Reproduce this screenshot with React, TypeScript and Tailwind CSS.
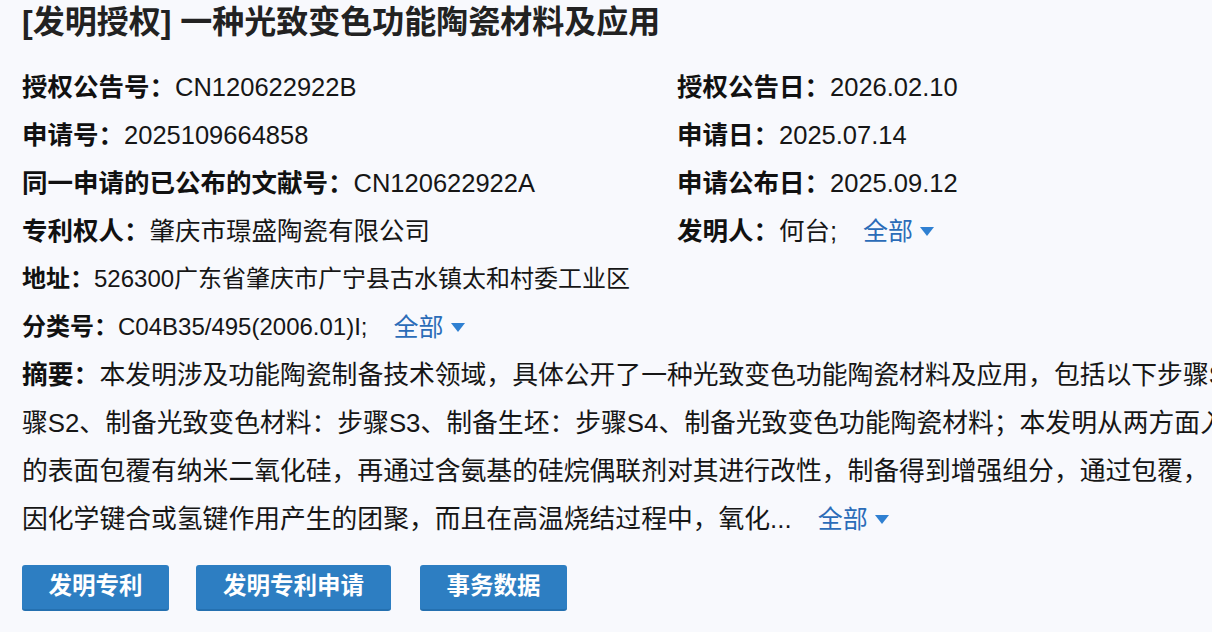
import React from "react";

const font = {
  fontFamily: '"Liberation Sans", "Noto Sans CJK SC", sans-serif',
};

/** 左列・右列の書誌項目 */
const ROWS: Array<[label: string, value: string, label2?: string, value2?: string]> = [
  ["授权公告号：", "CN120622922B", "授权公告日：", "2026.02.10"],
  ["申请号：", "2025109664858", "申请日：", "2025.07.14"],
  ["同一申请的已公布的文献号：", "CN120622922A", "申请公布日：", "2025.09.12"],
];

const ABSTRACT_LINES = [
  "骤S2、制备光致变色材料：步骤S3、制备生坯：步骤S4、制备光致变色功能陶瓷材料；本发明从两方面入手，",
  "的表面包覆有纳米二氧化硅，再通过含氨基的硅烷偶联剂对其进行改性，制备得到增强组分，通过包覆，",
];

function Caret() {
  return (
    <svg width="14" height="9" viewBox="0 0 14 9" className="ml-[7px] inline-block">
      <path d="M0 0h14L7 9z" fill="#2f80d2" />
    </svg>
  );
}

function More({ className = "" }: { className?: string }) {
  return (
    <span className={`inline-flex items-center text-[25px] text-[#2b6cb8] ${className}`}>
      全部
      <Caret />
    </span>
  );
}

function Label({ children }: { children: React.ReactNode }) {
  return <span className="font-bold text-[#111]">{children}</span>;
}

export default function App() {
  return (
    <div
      style={font}
      className="h-[632px] w-[1212px] overflow-hidden bg-[#f8f9fd] pl-[22px] text-[25.5px] text-[#161616]"
    >
      <h1 className="h-[44px] whitespace-nowrap text-[32px] font-semibold leading-[44px] text-[#222]">
        [发明授权] 一种光致变色功能陶瓷材料及应用
      </h1>

      <div className="mt-[19px] leading-[48px]">
        {ROWS.map(([l1, v1, l2, v2]) => (
          <div key={l1} className="grid grid-cols-[655px_1fr] whitespace-nowrap">
            <div>
              <Label>{l1}</Label>
              {v1}
            </div>
            <div>
              <Label>{l2}</Label>
              {v2}
            </div>
          </div>
        ))}

        <div className="grid grid-cols-[655px_1fr] whitespace-nowrap">
          <div>
            <Label>专利权人：</Label>
            肇庆市璟盛陶瓷有限公司
          </div>
          <div className="flex items-center">
            <Label>发明人：</Label>
            何台;
            <More className="ml-[26px]" />
          </div>
        </div>

        <div className="whitespace-nowrap text-[24px]">
          <Label>地址：</Label>
          526300广东省肇庆市广宁县古水镇太和村委工业区
        </div>

        <div className="flex items-center whitespace-nowrap text-[24px]">
          <Label>分类号：</Label>
          C04B35/495(2006.01)I;
          <More className="ml-[26px]" />
        </div>

        {/* 摘要：右端ははみ出して切れる */}
        <div className="text-[25.8px]">
          <div className="whitespace-nowrap">
            <Label>摘要：</Label>
            本发明涉及功能陶瓷制备技术领域，具体公开了一种光致变色功能陶瓷材料及应用，包括以下步骤S1、制备增强组分：步
          </div>
          {ABSTRACT_LINES.map((line) => (
            <div key={line} className="whitespace-nowrap">
              {line}
            </div>
          ))}
          <div className="flex items-center whitespace-nowrap">
            因化学键合或氢键作用产生的团聚，而且在高温烧结过程中，氧化...
            <More className="ml-[26px]" />
          </div>
        </div>
      </div>

      <div className="mt-[22px] flex gap-[27px]">
        {["发明专利", "发明专利申请", "事务数据"].map((t, i) => (
          <button
            key={t}
            className={`h-[46px] rounded-[3px] border-b-2 border-[#2470b0] bg-[#2d7ec2] text-[23.5px] font-bold text-white ${
              i === 1 ? "w-[195px]" : "w-[147px]"
            } ${i === 2 ? "ml-[2px]" : ""}`}
          >
            {t}
          </button>
        ))}
      </div>
    </div>
  );
}
